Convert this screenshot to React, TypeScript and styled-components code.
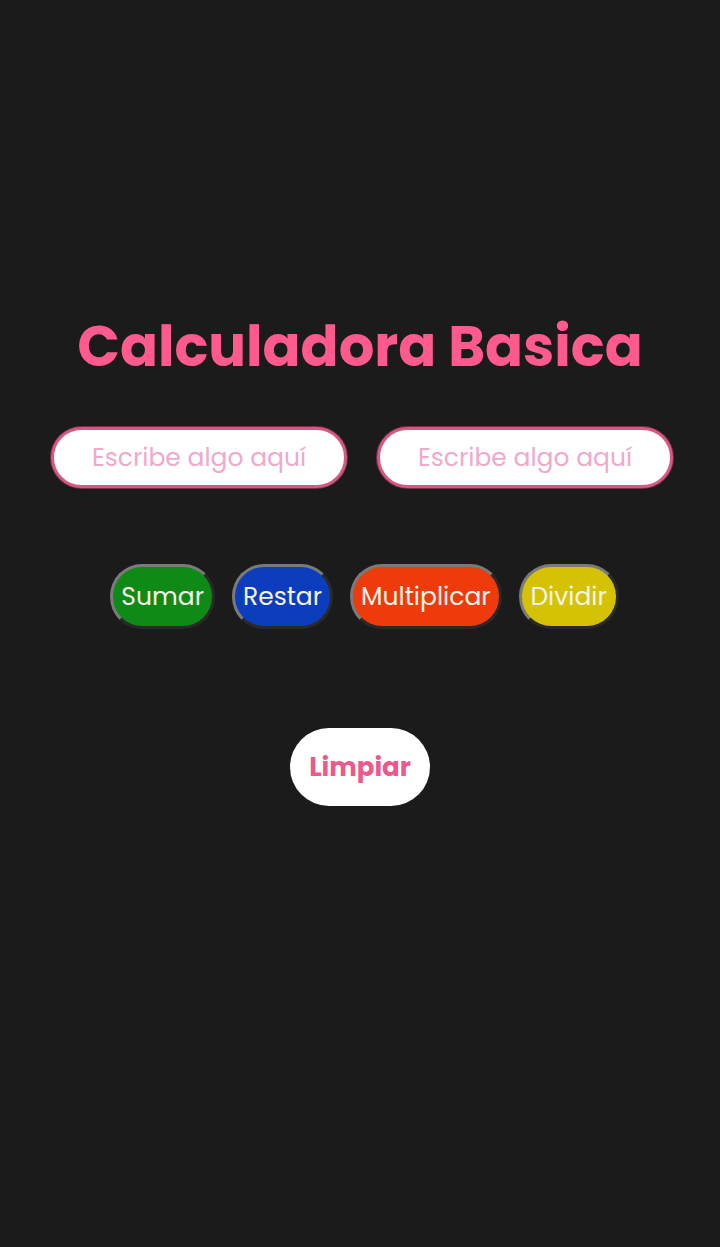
import React from "react";
import styled, { createGlobalStyle } from "styled-components";

const Global = createGlobalStyle`
  html, body { margin: 0; padding: 0; background: #1b1b1b; }
  body { font-family: Poppins, "Open Sans", "Liberation Sans", sans-serif; }
  * { box-sizing: border-box; }
`;

const Page = styled.main`
  min-height: 1247px;
  display: flex;
  flex-direction: column;
  align-items: center;
  padding-top: 312px;
`;

const Title = styled.h1`
  margin: 0;
  color: #fe5a8d;
  font-size: 56px;
  font-weight: 700;
  line-height: 70px;
`;

const InputRow = styled.div`
  display: flex;
  gap: 30px;
  margin-top: 45px;
  margin-left: 4px;
`;

const Field = styled.input`
  width: 296px;
  height: 61px;
  border-radius: 31px;
  border: 3px solid #d45a82;
  box-shadow: 0 0 0 1px #7a2d48;
  background: #fff;
  font-family: inherit;
  font-size: 25px;
  text-align: center;
  color: #333;
  outline: none;
  &::placeholder { color: #eeaacb; }
`;

const OpRow = styled.div`
  display: flex;
  gap: 17px;
  margin-top: 76px;
  margin-left: 9px;
`;

const OpButton = styled.button<{ $bg: string }>`
  min-width: 100px;
  height: 65px;
  padding: 0 8px;
  border-radius: 32px;
  background: ${(p) => p.$bg};
  color: #f4f4e8;
  font-family: inherit;
  font-size: 25px;
  border-width: 3px;
  border-style: solid;
  border-color: #7a7a7a #2a2a2a #2a2a2a #7a7a7a;
  cursor: pointer;
`;

const ClearButton = styled.button`
  margin-top: 99px;
  width: 140px;
  height: 78px;
  border-radius: 39px;
  border: none;
  background: #fff;
  color: #ea5a8e;
  font-family: inherit;
  font-size: 26px;
  font-weight: 700;
  cursor: pointer;
`;

const ops = [
  { label: "Sumar", bg: "#0f8a16" },
  { label: "Restar", bg: "#0c3dbd" },
  { label: "Multiplicar", bg: "#ee3b0c" },
  { label: "Dividir", bg: "#d6c204" },
];

export default function App() {
  return (
    <>
      <Global />
      <Page>
        <Title>Calculadora Basica</Title>
        <InputRow>
          <Field placeholder="Escribe algo aquí" />
          <Field placeholder="Escribe algo aquí" />
        </InputRow>
        <OpRow>
          {ops.map((o) => (
            <OpButton key={o.label} $bg={o.bg}>
              {o.label}
            </OpButton>
          ))}
        </OpRow>
        <ClearButton>Limpiar</ClearButton>
      </Page>
    </>
  );
}
